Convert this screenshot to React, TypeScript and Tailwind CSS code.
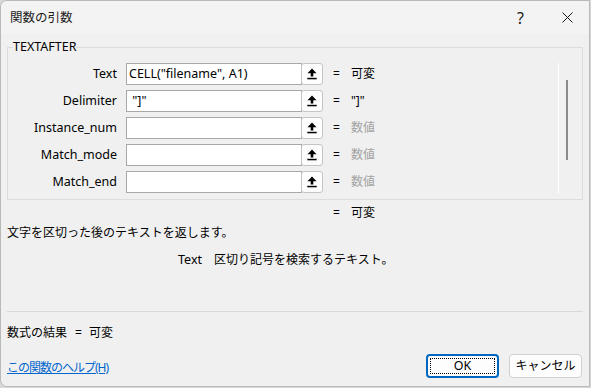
import React from "react";

type Arg = {
  name: string;
  value: string;
  result: string;
  muted?: boolean;
};

const args: Arg[] = [
  { name: "Text", value: 'CELL("filename", A1)', result: "可変" },
  { name: "Delimiter", value: ' "]"', result: '"]"' },
  { name: "Instance_num", value: "", result: "数値", muted: true },
  { name: "Match_mode", value: "", result: "数値", muted: true },
  { name: "Match_end", value: "", result: "数値", muted: true },
];

function RefIcon() {
  return (
    <svg width="10" height="12" viewBox="0 0 10 12">
      <path d="M5 0.5 L9.5 5.2 L6.3 5.2 L6.3 8.6 L3.7 8.6 L3.7 5.2 L0.5 5.2 Z" fill="#000" />
      <rect x="0.3" y="9.8" width="9.4" height="1.5" fill="#000" />
    </svg>
  );
}

function ArgRow({ arg }: { arg: Arg }) {
  return (
    <div className="flex h-[22px] items-center">
      <div className="w-[108px] text-right text-[12.5px] text-black">{arg.name}</div>
      <div className="ml-[9px] flex h-[22px] w-[176px] items-center border border-[#a8a8a8] bg-white pl-[2px] text-[12.5px] whitespace-pre text-black">
        {arg.value}
      </div>
      <div className="-ml-px flex h-[22px] w-[22px] items-center justify-center rounded-[3px] border border-[#c4c4c4] bg-[#fdfdfd]">
        <RefIcon />
      </div>
      <span className="ml-[10px] text-black">=</span>
      <span className={"ml-[11px] " + (arg.muted ? "text-[#a3a3a3]" : "text-black")}>
        {arg.result}
      </span>
    </div>
  );
}

export default function App() {
  return (
    <div
      className="h-[388px] w-[591px] bg-[#d8d8d8] text-[12px] leading-[16px]"
      style={{ fontFamily: '"Noto Sans", "Noto Sans CJK JP", sans-serif' }}
    >
      <div className="flex h-[387px] w-[590px] flex-col overflow-hidden rounded-tl-[7px] rounded-bl-[7px] border border-[#b9b9b9] bg-[#f0f0f0]">
        {/* title bar */}
        <div className="flex h-[33px] shrink-0 items-center bg-[#f3f3f3] pl-[9px]">
          <span className="text-[12.5px] text-[#1b1b1b]">関数の引数</span>
          <span className="ml-auto text-[16px] leading-[16px] text-[#1b1b1b]">?</span>
          <svg className="ml-[38px] mr-[16px]" width="11" height="11" viewBox="0 0 11 11">
            <path d="M0.5 0.5 L10.5 10.5 M10.5 0.5 L0.5 10.5" stroke="#1b1b1b" strokeWidth="1" />
          </svg>
        </div>

        <div className="flex flex-1 flex-col px-[6px]">
          <fieldset className="mt-[5px] h-[161px] border border-[#dcdcdc] pl-px">
            <legend className="ml-[4px] text-[12.5px] leading-[16px] text-black">TEXTAFTER</legend>
            <div className="flex pt-[8px]">
              <div className="flex w-[549px] flex-col gap-[5px]">
                {args.map((a) => (
                  <ArgRow key={a.name} arg={a} />
                ))}
              </div>
              <div className="h-[131px] w-px bg-white" />
              <div className="ml-[7px] mt-[17px] h-[80px] w-[2px] bg-[#8a8a8a]" />
            </div>
          </fieldset>

          <div className="mt-[5px] flex pl-[326px] text-black">
            <span>=</span>
            <span className="ml-[11px]">可変</span>
          </div>

          <div className="mt-[4px] text-black">文字を区切った後のテキストを返します。</div>

          <div className="mt-[11px] flex pl-[171px] text-black">
            <span className="text-[12.5px]">Text</span>
            <span className="ml-[12px]">区切り記号を検索するテキスト。</span>
          </div>

          <div className="mt-[43px] h-px bg-[#d9d9d9]" />

          <div className="mt-[13px] flex text-black">
            <span>数式の結果</span>
            <span className="ml-[8px]">=</span>
            <span className="ml-[7px]">可変</span>
          </div>

          <div className="mt-[13px] flex items-start">
            <a className="mt-[6px] tracking-[-1px] text-[#0066cc] underline">この関数のヘルプ(H)</a>
            <button className="ml-auto flex h-[24px] w-[73px] items-center justify-center rounded-[4px] border-2 border-[#0067c0] bg-[#fdfdfd] p-[2px]">
              <span className="flex h-full w-full items-center justify-center border border-dotted border-black text-[12.5px] text-black">
                OK
              </span>
            </button>
            <button className="ml-[10px] mr-[1px] flex h-[24px] w-[73px] items-center justify-center rounded-[4px] border border-[#d0d0d0] bg-[#fdfdfd] text-black">
              キャンセル
            </button>
          </div>
        </div>
      </div>
    </div>
  );
}
